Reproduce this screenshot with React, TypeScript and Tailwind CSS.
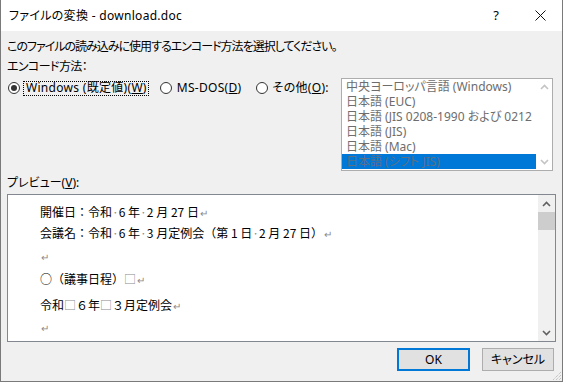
import React from 'react'

const ui = "font-['Noto_Sans','Noto_Sans_CJK_JP',sans-serif] [font-feature-settings:'palt']"

function Radio({ checked = false }: { checked?: boolean }) {
  return (
    <span className="w-[12px] h-[12px] shrink-0 rounded-full border border-[#333333] bg-white flex items-center justify-center">
      {checked && <span className="w-[6px] h-[6px] rounded-full bg-[#333333]" />}
    </span>
  )
}

function Chevron({ up, color }: { up: boolean; color: string }) {
  return (
    <svg width="9" height="6" viewBox="0 0 9 6">
      <path d={up ? 'M1 5 L4.5 1.5 L8 5' : 'M1 1 L4.5 4.5 L8 1'} fill="none" stroke={color} strokeWidth="1.6" />
    </svg>
  )
}

const Mark = ({ children }: { children: React.ReactNode }) => (
  <span className="text-[#8a8a8a]">{children}</span>
)
const Ret = () => <span className="text-[#8a8a8a] text-[10px] ml-[1px]">↵</span>

const encodings = [
  '中央ヨーロッパ言語 (Windows)',
  '日本語 (EUC)',
  '日本語 (JIS 0208-1990 および 0212',
  '日本語 (JIS)',
  '日本語 (Mac)',
  '日本語 (シフト JIS)',
]

export default function App() {
  return (
    <div className={`relative w-[563px] h-[382px] bg-[#f0f0f0] border-x border-b border-[#7a7a7a] flex flex-col text-[12px] text-black overflow-hidden ${ui}`}>
      {/* title bar */}
      <div className="h-[31px] bg-white flex items-center shrink-0">
        <span className="pl-[8px] text-[12px] leading-none tracking-[0.3px]">ファイルの変換 - download.doc</span>
        <span className="ml-auto w-[44px] text-center text-[13px]">?</span>
        <span className="w-[44px] flex justify-center">
          <svg width="11" height="11" viewBox="0 0 11 11">
            <path d="M0.5 0.5 L10.5 10.5 M10.5 0.5 L0.5 10.5" stroke="#111" strokeWidth="1" />
          </svg>
        </span>
      </div>

      <div className="flex flex-col pl-[6px] pr-[6px]">
        <div className="mt-[6px] h-[20px] leading-[20px] tracking-[-1px]">このファイルの読み込みに使用するエンコード方法を選択してください。</div>
        <div className="h-[20px] leading-[20px] tracking-[-0.6px]">エンコード方法：</div>

        <div className="flex">
          <div className="w-[334px] flex items-center h-[16px] mt-[3px] tracking-[0.3px]">
            <span className="ml-[1px]"><Radio checked /></span>
            <span className="ml-[3px] h-[15px] pl-[2px] pr-[1px] border border-dotted border-black flex items-center leading-[12px]">
              Windows (既定値)(<span className="underline">W</span>)
            </span>
            <span className="ml-[11px]"><Radio /></span>
            <span className="ml-[5px] leading-none">MS-DOS(<span className="underline">D</span>)</span>
            <span className="ml-[15px]"><Radio /></span>
            <span className="ml-[4px] leading-none">その他(<span className="underline">O</span>):</span>
          </div>
          <div className="mt-[1px] w-[212px] h-[93px] border border-[#adadad] bg-white flex">
            <div className="flex-1 flex flex-col">
              {encodings.map((e, i) => (
                <div
                  key={e}
                  className={`h-[15px] leading-[15px] pl-[4px] whitespace-nowrap overflow-hidden ${i === 5 ? 'bg-[#0078d7] text-[#5d6f82]' : 'text-[#6d6d6d]'}`}
                >
                  {e}
                </div>
              ))}
            </div>
            <div className="w-[16px] flex flex-col items-center justify-between py-[5px]">
              <Chevron up color="#c4c4c4" />
              <Chevron up={false} color="#c4c4c4" />
            </div>
          </div>
        </div>

        <div className="mt-[2px] h-[20px] leading-[20px]">プレビュー(<span className="underline">V</span>):</div>

        <div className="mt-[1px] h-[148px] border border-[#828790] bg-white flex">
          <div className="flex-1 pl-[32px] pt-[7px] font-['Noto_Sans_CJK_JP',sans-serif] text-[12px] [font-feature-settings:normal]">
            <div className="h-[20px] leading-[20px] whitespace-nowrap">
              開催日：令和<Mark>·</Mark>6 年<Mark>·</Mark>2 月 27 日<Ret />
            </div>
            <div className="mt-[1px] h-[20px] leading-[20px] whitespace-nowrap">
              会議名：令和<Mark>·</Mark>6 年<Mark>·</Mark>3 月定例会（第 1 日<Mark>·</Mark>2 月 27 日）<Ret />
            </div>
            <div className="mt-[3px] h-[20px] leading-[20px]"><Ret /></div>
            <div className="mt-[3px] h-[20px] leading-[20px] whitespace-nowrap">
              ○（議事日程）<Mark>□</Mark><Ret />
            </div>
            <div className="mt-[6px] h-[20px] leading-[20px] whitespace-nowrap">
              令和<Mark>□</Mark>６年<Mark>□</Mark>３月定例会<Ret />
            </div>
            <div className="mt-[2px] h-[20px] leading-[20px]"><Ret /></div>
          </div>
          <div className="w-[17px] bg-[#f0f0f0] flex flex-col items-center">
            <div className="h-[17px] flex items-center justify-center"><Chevron up color="#606060" /></div>
            <div className="w-full h-[18px] bg-[#cdcdcd]" />
            <div className="flex-1" />
            <div className="h-[17px] flex items-center justify-center"><Chevron up={false} color="#606060" /></div>
          </div>
        </div>

        <div className="mt-[6px] flex justify-end gap-[12px] pr-[2px]">
          <button className="w-[73px] h-[23px] bg-[#e1e1e1] border-2 border-[#0078d7] leading-none">OK</button>
          <button className="w-[72px] h-[23px] bg-[#e1e1e1] border border-[#adadad] leading-none">キャンセル</button>
        </div>
      </div>

      {/* size grip */}
      <svg className="absolute right-0 bottom-0" width="11" height="11" viewBox="0 0 11 11">
        <path d="M10 2 L2 10 M10 5 L5 10 M10 8 L8 10" stroke="#b0b0b0" strokeWidth="1" strokeDasharray="1 1" />
      </svg>
    </div>
  )
}
